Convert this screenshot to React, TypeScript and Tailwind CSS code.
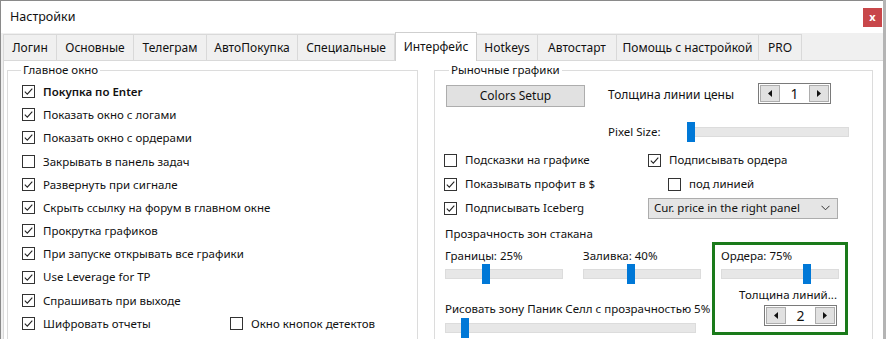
import React from "react";

const tabs = [
  { name: "Логин", w: "w-[54px]" },
  { name: "Основные", w: "w-[77px]" },
  { name: "Телеграм", w: "w-[73px]" },
  { name: "АвтоПокупка", w: "w-[91px]" },
  { name: "Специальные", w: "w-[97px]" },
  { name: "Интерфейс", w: "w-[82px]", active: true },
  { name: "Hotkeys", w: "w-[61px]" },
  { name: "Автостарт", w: "w-[79px]" },
  { name: "Помощь с настройкой", w: "w-[142px]" },
  { name: "PRO", w: "w-[43px]" },
];

const mainWindow = [
  { label: "Покупка по Enter", checked: true, bold: true },
  { label: "Показать окно с логами", checked: true },
  { label: "Показать окно с ордерами", checked: true },
  { label: "Закрывать в панель задач", checked: false },
  { label: "Развернуть при сигнале", checked: true },
  { label: "Скрыть ссылку на форум в главном окне", checked: true },
  { label: "Прокрутка графиков", checked: true },
  { label: "При запуске открывать все графики", checked: true },
  { label: "Use Leverage for TP", checked: true },
  { label: "Спрашивать при выходе", checked: true },
];

function Check({ checked, label, bold }: { checked: boolean; label: string; bold?: boolean }) {
  return (
    <div className="flex items-center gap-[8px]">
      <div className="w-[13px] h-[13px] border border-[#333333] bg-white flex items-center justify-center shrink-0">
        {checked && (
          <svg width="11" height="11" viewBox="0 0 11 11">
            <path d="M1.8 5.6 L4.3 8.1 L9.3 2.6" fill="none" stroke="#222222" strokeWidth="1.1" />
          </svg>
        )}
      </div>
      <span className={`whitespace-nowrap ${bold ? "font-semibold" : ""}`}>{label}</span>
    </div>
  );
}

function Slider({ w, pos }: { w: string; pos: number }) {
  return (
    <div className={`relative h-[20px] flex items-center ${w}`}>
      <div className="w-full h-[10px] bg-[#e7e7e7] border border-[#dcdcdc]" />
      <div className="absolute top-0 w-[8px] h-[20px] bg-[#0078d7]" style={{ left: pos }} />
    </div>
  );
}

function Arrow({ dir }: { dir: "l" | "r" }) {
  return (
    <svg width="4" height="7" viewBox="0 0 4 7">
      {dir === "l" ? <path d="M4 0 L0 3.5 L4 7 Z" fill="#111" /> : <path d="M0 0 L4 3.5 L0 7 Z" fill="#111" />}
    </svg>
  );
}

function Stepper({ value }: { value: number }) {
  return (
    <div className="flex items-center w-[73px] h-[21px] border border-[#7a7a7a] px-[1px]">
      <div className="w-[20px] h-[17px] bg-[#e1e1e1] border border-[#adadad] flex items-center justify-center">
        <Arrow dir="l" />
      </div>
      <div className="flex-1 text-center text-[14px]">{value}</div>
      <div className="w-[20px] h-[17px] bg-[#e1e1e1] border border-[#adadad] flex items-center justify-center">
        <Arrow dir="r" />
      </div>
    </div>
  );
}

function GroupTitle({ children, x }: { children: React.ReactNode; x: string }) {
  return (
    <span className={`absolute -top-[9px] ${x} bg-white px-[2px] leading-[16px] whitespace-nowrap`}>{children}</span>
  );
}

export default function App() {
  return (
    <div className="w-[886px] h-[339px] overflow-hidden bg-[#f0f0f0] font-['Noto_Sans',sans-serif] text-[11.5px] text-[#111] flex">
      <div className="flex-1 flex flex-col border-t border-l border-[#8a8a8a] min-w-0">
        {/* title bar */}
        <div className="h-[32px] bg-white flex items-center justify-between pl-[9px] pr-[1px] shrink-0">
          <span className="text-[12.5px]">Настройки</span>
          <div className="w-[19px] h-[19px] bg-[#c8474a] text-white text-[11px] font-bold flex items-center justify-center leading-none pb-[2px]">
            x
          </div>
        </div>

        {/* tabs */}
        <div className="h-[27px] flex items-end pl-[2px] shrink-0 relative z-10">
          {tabs.map((t) =>
            t.active ? (
              <div
                key={t.name}
                className={`${t.w} h-[29px] -mb-[1px] bg-white border border-b-0 border-[#cfcfcf] flex items-center justify-center whitespace-nowrap text-[12px]`}
              >
                {t.name}
              </div>
            ) : (
              <div
                key={t.name}
                className={`${t.w} h-[26px] border-t border-r border-[#d9d9d9] first:border-l flex items-center justify-center whitespace-nowrap text-[12px]`}
              >
                {t.name}
              </div>
            )
          )}
        </div>

        {/* panel */}
        <div className="flex-1 flex pl-[2px]">
          <div className="flex-1 bg-white border-t border-l border-[#d9d9d9] flex items-start pl-[3px] pt-[9px] gap-[16px]">
            {/* Главное окно */}
            <div className="relative w-[411px] h-[300px] border border-[#dcdcdc] pl-[14px] pt-[9px]">
              <GroupTitle x="left-[13px]">Главное окно</GroupTitle>
              {mainWindow.map((c) => (
                <div key={c.label} className="h-[23.2px] flex items-center">
                  <Check checked={c.checked} label={c.label} bold={c.bold} />
                </div>
              ))}
              <div className="h-[23.2px] flex items-center">
                <div className="w-[208px]">
                  <Check checked={true} label="Шифровать отчеты" />
                </div>
                <Check checked={false} label="Окно кнопок детектов" />
              </div>
            </div>

            {/* Рыночные графики */}
            <div className="relative w-[439px] h-[300px] border border-[#dcdcdc] pl-[9px] pt-[12px]">
              <GroupTitle x="left-[14px]">Рыночные графики</GroupTitle>

              <div className="flex items-start">
                <div className="ml-[2px] mt-[2px] w-[139px] h-[22px] bg-[#e1e1e1] border border-[#adadad] flex items-center justify-center text-[12px]">
                  Colors Setup
                </div>
                <div className="ml-[23px] w-[150px] h-[24px] flex items-center text-[12px]">Толщина линии цены</div>
                <Stepper value={1} />
              </div>

              <div className="flex items-center mt-[15px] ml-[164px]">
                <span className="w-[79px]">Pixel Size:</span>
                <Slider w="w-[162px]" pos={0} />
              </div>

              <div className="grid grid-cols-[204px_1fr] mt-[6px]">
                <div className="h-[24px] flex items-center">
                  <Check checked={false} label="Подсказки на графике" />
                </div>
                <div className="h-[24px] flex items-center">
                  <Check checked={true} label="Подписывать ордера" />
                </div>
                <div className="h-[24px] flex items-center">
                  <Check checked={true} label="Показывать профит в $" />
                </div>
                <div className="h-[24px] flex items-center pl-[20px]">
                  <Check checked={false} label="под линией" />
                </div>
                <div className="h-[24px] flex items-center">
                  <Check checked={true} label="Подписывать Iceberg" />
                </div>
                <div className="h-[24px] flex items-center">
                  <div className="w-[190px] h-[21px] bg-[#e5e5e5] border border-[#acacac] flex items-center justify-between pl-[5px] pr-[7px]">
                    <span className="whitespace-nowrap">Cur. price in the right panel</span>
                    <svg width="9" height="6" viewBox="0 0 9 6">
                      <path d="M0.5 0.8 L4.5 4.8 L8.5 0.8" fill="none" stroke="#333" strokeWidth="1" />
                    </svg>
                  </div>
                </div>
              </div>

              <div className="h-[22px] pt-[6px] flex items-center ml-[1px]">Прозрачность зон стакана</div>

              <div className="flex items-start ml-[1px]">
                <div className="w-[256px]">
                  <div className="flex gap-[20px]">
                    <div>
                      <div className="h-[16px] mt-[6px] flex items-center">Границы: 25%</div>
                      <Slider w="w-[118px]" pos={37} />
                    </div>
                    <div>
                      <div className="h-[16px] mt-[6px] flex items-center">Заливка: 40%</div>
                      <Slider w="w-[118px]" pos={44} />
                    </div>
                  </div>
                  <div className="h-[16px] mt-[17px] flex items-center whitespace-nowrap">
                    Рисовать зону Паник Селл с прозрачностью 5%
                  </div>
                  <div className="mt-[1px]">
                    <Slider w="w-[251px]" pos={16} />
                  </div>
                </div>

                <div className="ml-[11px] w-[136px] h-[93px] border-[3px] border-[#1a7a1a] pl-[6px] pr-[8px] pt-[3px] flex flex-col">
                  <div className="h-[16px] flex items-center">Ордера: 75%</div>
                  <Slider w="w-[118px]" pos={82} />
                  <div className="h-[16px] mt-[3px] flex items-center justify-end whitespace-nowrap">Толщина линий...</div>
                  <div className="mt-[2px] flex justify-end">
                    <Stepper value={2} />
                  </div>
                </div>
              </div>
            </div>
          </div>
        </div>
      </div>
      <div className="w-[3px] bg-[#b4b4b4] shrink-0" />
    </div>
  );
}
